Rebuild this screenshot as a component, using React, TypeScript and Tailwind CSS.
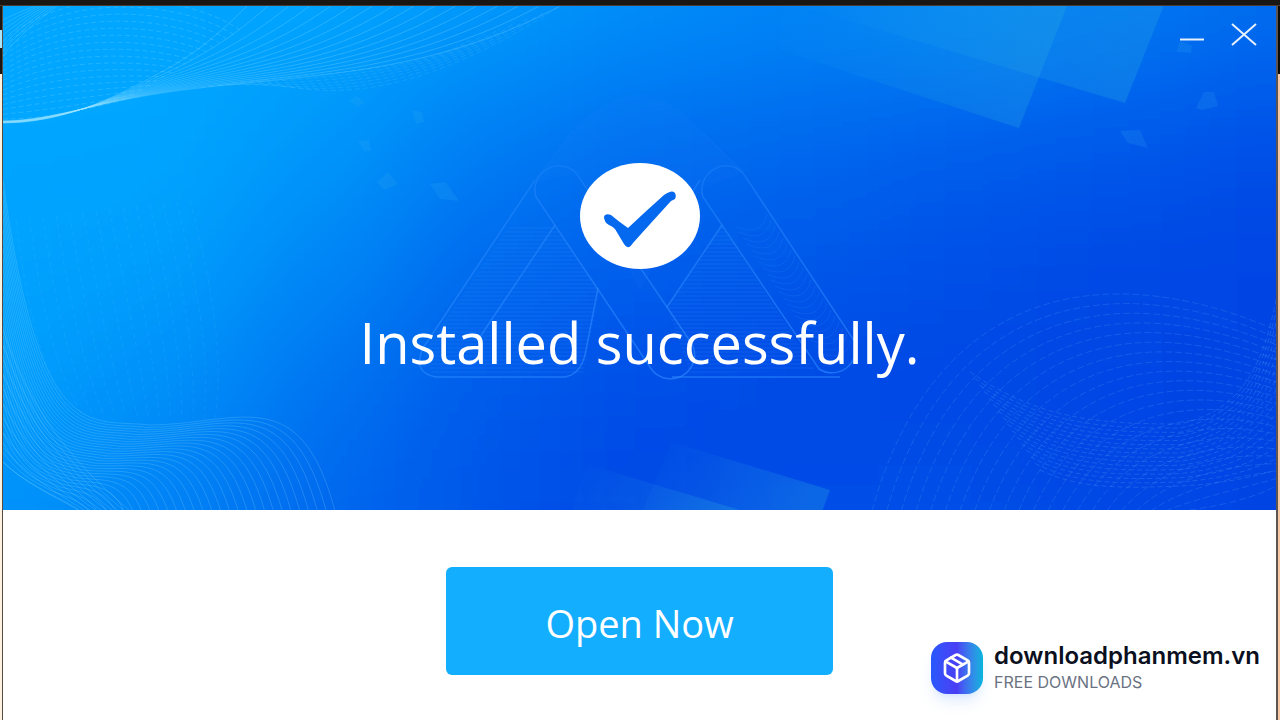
import React from 'react';
import { Package } from 'lucide-react';

// Depth of the blue on a coarse grid: 0 is the light edge, 100 the darkest
const TONES = [
  [0, 0, 2, 12, 24, 34, 34, 46, 58],
  [0, 0, 14, 40, 56, 62, 70, 78, 88],
  [3, 7, 32, 60, 72, 80, 88, 96, 100],
  [8, 22, 52, 78, 90, 95, 97, 100, 100],
  [20, 38, 64, 84, 97, 90, 88, 97, 99],
];

const CELL_W = 1274 / 8;
const CELL_H = 504 / 4;

function tone(t: number) {
  const k = t / 100;
  return `rgb(0, ${Math.round(166 - 98 * k)}, ${Math.round(255 - 27 * k)})`;
}

// Draws `count` curves that blend from one set of control points to the other
function blend(from: number[], to: number[], count: number) {
  return Array.from({ length: count }, (_, i) => {
    const k = i / (count - 1);
    const p = from.map((v, n) => (v + (to[n] - v) * k).toFixed(1));
    return `M${p[0]},${p[1]} C${p.slice(2).join(' ')}`;
  }).join(' ');
}

const WAVES = [
  // top left
  {
    d: blend(
      [3, 123, 60, 123, 110, 100, 150, 78, 190, 58, 215, 38, 247, 6],
      [3, 121, 60, 120, 100, 99, 200, 88, 300, 75, 430, 76, 560, 6],
      16,
    ),
    opacity: 0.24,
  },
  {
    d: blend(
      [3, 119, 40, 119, 80, 112, 130, 98],
      [3, 42, 60, -14, 180, -10, 240, 30],
      17,
    ),
    opacity: 0.2,
    dash: '5 3',
  },
  {
    d: blend([200, 88, 300, 72, 420, 74, 470, 40], [260, 80, 340, 104, 430, 90, 560, 6], 7),
    opacity: 0.12,
    dash: '5 3',
  },
  {
    d: blend([3, 20, 14, 14, 30, 8, 40, 4], [3, 56, 14, 40, 40, 18, 60, 4], 8),
    opacity: 0.22,
  },
  // bottom left
  {
    d: blend(
      [3, 462, 20, 478, 36, 486, 50, 494, 62, 500, 72, 505, 80, 511],
      [3, 180, 40, 450, 90, 418, 150, 425, 240, 424, 300, 380, 335, 511],
      30,
    ),
    opacity: 0.2,
  },
  {
    d: blend([3, 462, 24, 482, 50, 494, 80, 511], [3, 330, 30, 410, 70, 460, 130, 511], 10),
    opacity: 0.2,
  },
  {
    d: blend([16, 220, 26, 300, 40, 370, 70, 412], [190, 200, 210, 280, 225, 350, 215, 420], 14),
    opacity: 0.08,
    dash: '5 4',
  },
  // bottom right
  {
    d: blend(
      [872, 511, 930, 300, 1090, 250, 1276, 330],
      [1180, 511, 1210, 508, 1250, 500, 1276, 486],
      22,
    ),
    opacity: 0.13,
    dash: '7 3',
  },
  {
    d: blend(
      [970, 372, 1040, 420, 1100, 424, 1180, 424, 1240, 410, 1262, 370, 1276, 300],
      [1040, 470, 1080, 490, 1130, 488, 1180, 486, 1220, 484, 1250, 478, 1276, 470],
      16,
    ),
    opacity: 0.15,
    dash: '5 3',
  },
];

const SPARKS = [
  '349,101 357,96 365,102 358,107',
  '358,141 369,140 371,151 364,151',
  '377,182 388,172 398,184 384,190',
  '430,184 446,182 459,201 440,199',
  '412,110 422,112 424,122 416,124',
  '1176,52 1180,41 1192,46 1191,53',
  '1196,108 1204,92 1214,92 1218,106 1202,110',
  '1120,131 1140,130 1148,148 1128,143',
];

function HeroBackdrop() {
  return (
    <svg
      aria-hidden="true"
      className="absolute inset-0 h-full w-full"
      viewBox="3 6 1273 504"
      preserveAspectRatio="none"
    >
      <defs>
        <filter id="soften" filterUnits="userSpaceOnUse" x="-300" y="-300" width="1900" height="1150">
          <feGaussianBlur stdDeviation="58" />
        </filter>
        <linearGradient id="pane" x1="0" y1="0.2" x2="1" y2="0.5">
          <stop offset="0" stopColor="#30b4e0" stopOpacity="0" />
          <stop offset="1" stopColor="#30b4e0" stopOpacity="0.25" />
        </linearGradient>
        <linearGradient id="beam" gradientUnits="userSpaceOnUse" x1="0" y1="120" x2="0" y2="380">
          <stop offset="0" stopColor="#2f8dff" stopOpacity="0.05" />
          <stop offset="0.3" stopColor="#2f8dff" stopOpacity="0.45" />
          <stop offset="1" stopColor="#2f8dff" stopOpacity="0.6" />
        </linearGradient>
        <clipPath id="peaks">
          <path d="M555 225 L600 290 L583 374 L432 374 L424 352 L520 210 Z" />
          <path d="M722 225 L815 370 L690 374 L667 307 Z" />
        </clipPath>
      </defs>

      <g filter="url(#soften)">
        {Array.from({ length: 9 }, (_, r) =>
          Array.from({ length: 13 }, (_, c) => {
            const row = Math.min(Math.max(r - 2, 0), 4);
            const col = Math.min(Math.max(c - 2, 0), 8);
            return (
              <rect
                key={`${r}-${c}`}
                x={3 + (c - 2.5) * CELL_W}
                y={6 + (r - 2.5) * CELL_H}
                width={CELL_W + 1}
                height={CELL_H + 1}
                fill={tone(TONES[row][col])}
              />
            );
          }),
        )}
      </g>

      {/* glass panes */}
      <g fill="url(#pane)">
        <path d="M780 -40 L1085 -40 L1019 128 L780 50 Z" />
        <path d="M800 -40 L1182 -40 L1125 103 L800 6 Z" />
        <path d="M672 442 L830 490 L822 512 L642 512 Z" />
        <path d="M586 464 L740 510 L740 530 L566 530 Z" />
      </g>
      <g fill="#3fb4f0" fillOpacity="0.15">
        {SPARKS.map((points) => (
          <polygon key={points} points={points} />
        ))}
      </g>

      {WAVES.map((wave, i) => (
        <path
          key={i}
          d={wave.d}
          fill="none"
          stroke="#a5e4ff"
          strokeOpacity={wave.opacity}
          strokeDasharray={wave.dash}
        />
      ))}

      {/* peaks emblem behind the title */}
      <path
        d="M533 183 L573 130 Q640 60 700 130 L745 172 L700 190 L640 290 L577 173 Z"
        fill="#2f8dff"
        fillOpacity="0.07"
      />
      <g clipPath="url(#peaks)" stroke="#3f96ff" strokeOpacity="0.22">
        {Array.from({ length: 38 }, (_, i) => (
          <line key={i} x1="410" x2="860" y1={228 + i * 4} y2={228 + i * 4} />
        ))}
      </g>
      <g fill="none" stroke="url(#beam)" strokeWidth="1.5">
        <path d="M536 197 A24 24 0 0 1 576 173 L692 344 A24 24 0 0 1 652 370 Z" />
        <path d="M703 197 A24 24 0 0 1 743 173 L855 342 A24 24 0 0 1 819 369 Z" />
        <path d="M535 180 L423 348 Q412 373 436 377 L565 377 Q582 374 586 350 L598 288" />
        <path d="M555 225 L480 337" />
        <path d="M722 225 L667 307" />
        <path d="M700 180 L690 196" />
        <path d="M672 377 L840 377" />
      </g>
      <g fill="none" stroke="#2f8dff" strokeOpacity="0.15">
        <path d="M573 130 L535 180" />
        <path d="M700 130 L743 173" />
      </g>
      <g fill="none" stroke="#3f96ff" strokeOpacity="0.16">
        {Array.from({ length: 22 }, (_, i) => (
          <path key={i} d={`M${735 + i * 4} ${226 + i * 6} q26 12 32 -12`} />
        ))}
      </g>
    </svg>
  );
}

function SuccessMark() {
  return (
    <svg aria-hidden="true" className="relative h-[106px] w-[120px]" viewBox="0 0 120 106">
      <ellipse cx="60" cy="53" rx="60" ry="53" fill="#fff" />
      <path
        d="M24 54 Q25 50 31 52 Q38 58 48 65 Q66 48 84 32 Q91 27 94 29 Q97 32 95 36 L91 38 Q70 61 53 80 Q48 88 44 81 L35 66 Q32 63 29 62 Q24 59 24 54 Z"
        fill="#0569f0"
      />
    </svg>
  );
}

function WindowControls() {
  return (
    <div className="absolute top-4 right-[18px] flex gap-6 text-white/90">
      <button type="button" aria-label="Minimize" className="flex h-7 w-7 items-center justify-center">
        <svg className="h-7 w-7" viewBox="0 0 28 28" stroke="currentColor" strokeWidth="2">
          <path d="M2 17.5 H26" />
        </svg>
      </button>
      <button type="button" aria-label="Close" className="flex h-7 w-7 items-center justify-center">
        <svg className="h-7 w-7" viewBox="0 0 28 28" stroke="currentColor" strokeWidth="2">
          <path d="M2 2 L26 23 M26 2 L2 23" />
        </svg>
      </button>
    </div>
  );
}

function Brand() {
  return (
    <div className="absolute right-4 bottom-[26px] flex items-center gap-[11px] font-['Inter',sans-serif]">
      <div className="flex h-[52px] w-[52px] items-center justify-center rounded-2xl bg-linear-to-r from-[#2458fb] via-[#4a3df5] to-[#00b4dc] text-white shadow-lg shadow-blue-500/15">
        <Package size={32} strokeWidth={2} />
      </div>
      <div>
        <p className="text-2xl leading-7 font-semibold text-[#0b1020]">downloadphanmem.vn</p>
        <p className="text-base leading-6 text-gray-500">FREE DOWNLOADS</p>
      </div>
    </div>
  );
}

export default function App() {
  return (
    <div className="flex min-h-screen flex-col bg-white">
      <div className="h-[6px] border-b border-[#4a3a30] bg-[#191613]" />
      <div className="flex flex-1">
        <div className="flex w-[3px] flex-col border-r border-[#5a4a40] bg-[#fdf3e2]">
          <div className="h-6 bg-[#191613]" />
          <div className="h-[18px] bg-[#a8e4fa]" />
          <div className="h-[26px] bg-[#191613]" />
        </div>

        <main className="relative flex flex-1 flex-col font-['Open_Sans',sans-serif]">
          <section className="relative flex h-[504px] flex-col items-center overflow-hidden bg-[#0068f0] pt-[157px]">
            <HeroBackdrop />
            <SuccessMark />
            <h1 className="relative mt-9 text-[56px] leading-[74px] text-white">Installed successfully.</h1>
            <WindowControls />
          </section>
          <section className="flex flex-1 flex-col items-center pt-[57px]">
            <button type="button" className="h-[108px] w-[387px] rounded-md bg-[#14aeff] pt-1 text-[38px] text-white">
              Open Now
            </button>
          </section>
          <Brand />
        </main>

        <div className="w-1 border-l-2 border-[#5c5450] bg-[#f6c9a4]">
          <div className="h-[68px] bg-[#0c0a08]" />
        </div>
      </div>
    </div>
  );
}
